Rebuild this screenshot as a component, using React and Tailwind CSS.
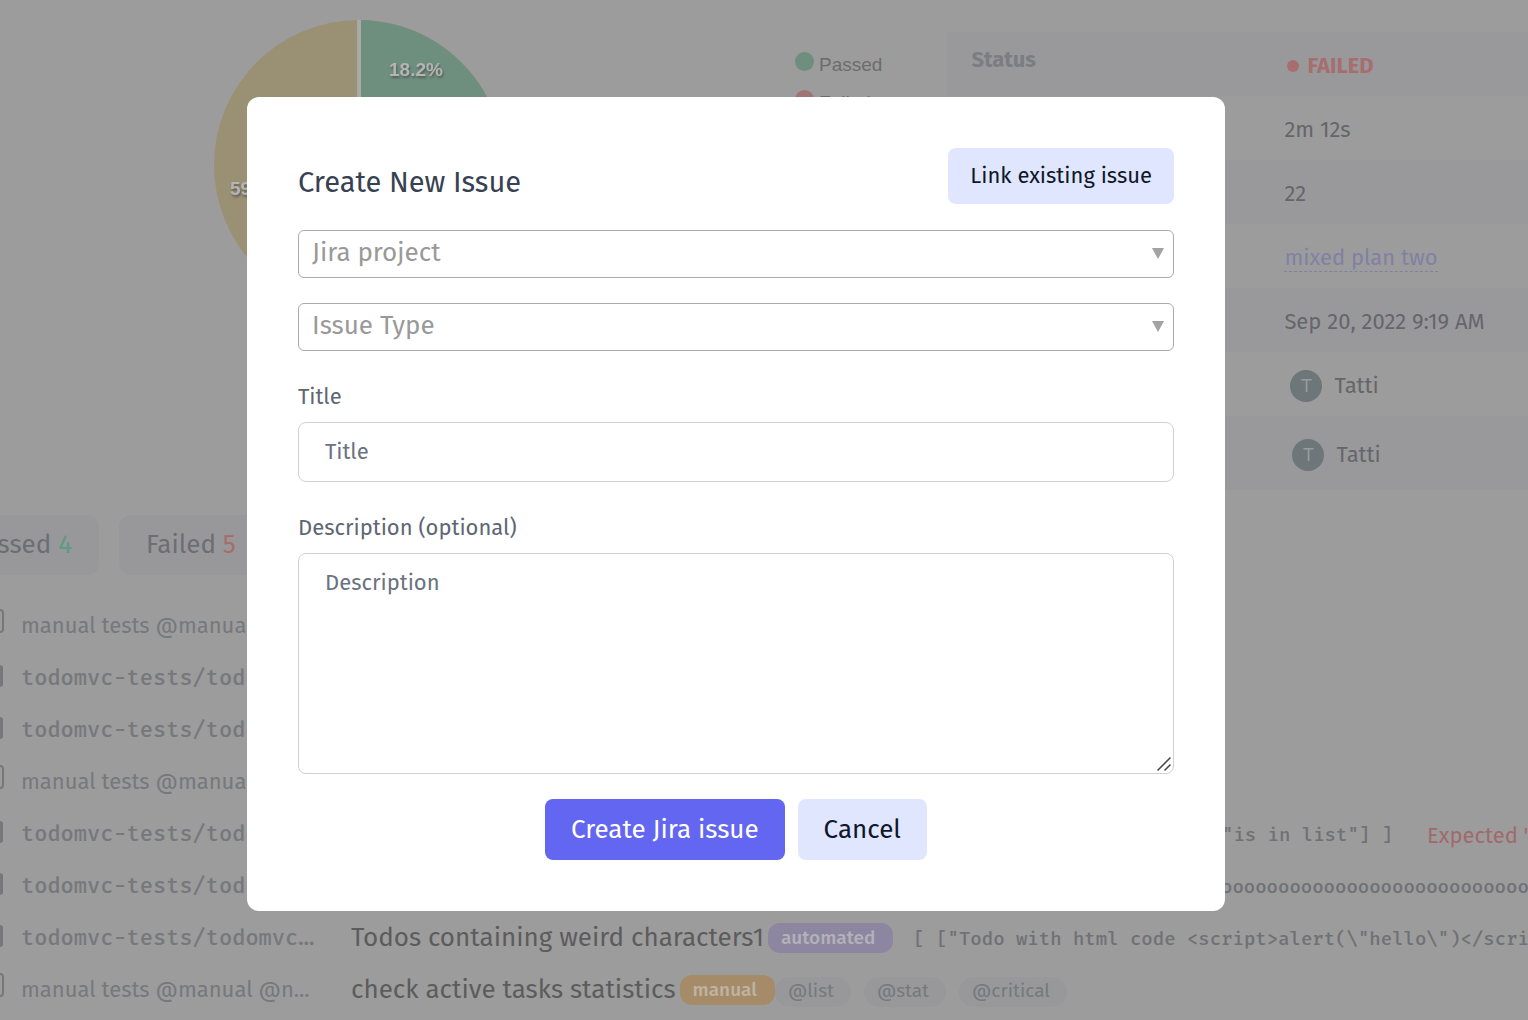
import React from "react";

const SANS = "font-['Fira_Sans','Open_Sans','Noto_Sans',sans-serif]";
const MONO = "font-['Fira_Mono','DejaVu_Sans_Mono',monospace]";

function Pie() {
  return (
    <svg viewBox="0 0 292 292" className="h-[292px] w-[292px]" role="img" aria-label="Results">
      <circle cx="146" cy="146" r="145" fill="#9a9073" />
      <path d="M146 146 V1 A145 145 0 0 1 277.9 206.3 Z" fill="#6f8f7e" />
      <path d="M146 146 L277.9 206.3 A145 145 0 0 1 67.5 267.9 Z" fill="#a07474" />
      <path d="M146 1 V146" stroke="#a9a9a9" strokeWidth="4" />
      <g
        fill="#b4b4b4"
        fontSize="19"
        fontWeight="700"
        fontFamily="Liberation Sans, sans-serif"
        style={{ filter: "drop-shadow(1px 2px 1px rgba(60,60,60,.6))" }}
      >
        <text x="176" y="57">18.2%</text>
        <text x="17" y="176">59.1%</text>
      </g>
    </svg>
  );
}

function LegendItem({ color, label }) {
  return (
    <li className="flex h-[38px] items-start gap-[5px]">
      <span className={`size-[19px] rounded-full ${color}`} />
      <span className="pt-0.5 text-[19px] leading-[22px] text-[#6c6c6c]">{label}</span>
    </li>
  );
}

function Person({ name, indent }) {
  return (
    <span className={`flex items-center gap-3 ${indent}`}>
      <span className="flex size-8 items-center justify-center rounded-full bg-[#6d7678] font-['Liberation_Sans',sans-serif] text-lg text-[#989c9d]">
        T
      </span>
      {name}
    </span>
  );
}

function InfoTable() {
  const rows = [
    {
      label: "Status",
      value: (
        <span className="flex items-center gap-2 pl-[3px] font-bold text-[#a76e6e]">
          <span className="size-3 rounded-full bg-[#a76e6e]" />
          FAILED
        </span>
      ),
    },
    { value: "2m 12s" },
    { value: "22" },
    {
      value: (
        <a href="#plan" className="border-b border-dashed border-[#8280a4] text-[#8280a4]">
          mixed plan two
        </a>
      ),
    },
    { value: "Sep 20, 2022 9:19 AM" },
    { value: <Person name="Tatti" indent="pl-1.5" /> },
    { value: <Person name="Tatti" indent="pl-2" /> },
  ];
  return (
    <table className="w-full border-collapse text-[22px] leading-7 text-[#65666a]">
      <tbody>
        {rows.map((r, i) => (
          <tr key={i} className="h-16 odd:bg-[#99999c] last:h-[74px]">
            <th scope="row" className="w-[337px] pt-3.5 pl-6 text-left align-top font-bold text-[#7c7d82]">
              {r.label}
            </th>
            <td className="pt-1 whitespace-nowrap">{r.value}</td>
          </tr>
        ))}
      </tbody>
    </table>
  );
}

function Tab({ label, count, color }) {
  return (
    <button type="button" className="h-15 rounded-xl bg-[#98989b] px-[27px] pb-0.5 text-[26px] text-[#6d6e72]">
      {label} <span className={color}>{count}</span>
    </button>
  );
}

function Suite({ manual }) {
  return manual ? (
    <>
      <span className="mb-2 h-6 w-1 shrink-0 rounded-r border-y-2 border-r-2 border-[#77787c]" />
      <span className="w-[330px] shrink-0 pl-[17px] text-[22px] text-[#77787c]">manual tests @manual @n...</span>
    </>
  ) : (
    <>
      <span className="mb-0.5 h-[22px] w-[3px] shrink-0 rounded-r bg-[#77787c]" />
      <span className={`w-[331px] shrink-0 pl-[18px] text-[22px] font-medium text-[#77787c] ${MONO}`}>
        todomvc-tests/todomvc<span className={SANS}>…</span>
      </span>
    </>
  );
}

function Row({ manual, children }) {
  return (
    <li className="flex h-13 items-center whitespace-nowrap">
      <Suite manual={manual} />
      <div className="flex items-center pl-[17px]">{children}</div>
    </li>
  );
}

function Tag({ children }) {
  return (
    <span className="mt-1.5 mr-[13px] h-[30px] rounded-full bg-[#98989b] pr-[17px] pl-[13px] text-[19px] leading-[28px] text-[#77787c]">
      {children}
    </span>
  );
}

const code = `mt-1 text-[19px] font-medium text-[#707175] ${MONO}`;
const testName = "text-[26px] text-[#5c5c5c]";
const kind = "mt-0.5 ml-1 h-[30px] rounded-xl pr-[18px] pl-[13px] text-[19px] leading-[30px] font-medium";

function Report() {
  return (
    <div className="min-h-screen overflow-hidden bg-[#9c9c9c]">
      <div className="flex h-[515px] items-start">
        <div className="flex flex-1 justify-between pt-[19px] pr-[65px] pl-[213px] font-['Liberation_Sans',sans-serif]">
          <Pie />
          <ul className="pt-[33px]">
            <LegendItem color="bg-[#6f8f7e]" label="Passed" />
            <LegendItem color="bg-[#a07474]" label="Failed" />
          </ul>
        </div>
        <div className="w-[38%] pt-8">
          <InfoTable />
        </div>
      </div>
      <div className="-ml-[57px] flex gap-5">
        <Tab label="Passed" count="4" color="text-[#5f9a84]" />
        <Tab label="Failed" count="5" color="text-[#a86c6c]" />
      </div>
      <ul className="mt-6">
        <Row manual />
        <Row />
        <Row />
        <Row manual />
        <Row>
          <span className="w-[871px] shrink-0" />
          <span className={code}>"is in list"] ]</span>
          <span className="mt-1 pl-[34px] text-[22px] text-[#a06a6c]">Expected "Todo</span>
        </Row>
        <Row>
          <span className="w-[870px] shrink-0" />
          <span className={code}>oooooooooooooooooooooooooooooooo</span>
        </Row>
        <Row>
          <span className={testName}>Todos containing weird characters1</span>
          <span className={`bg-[#8c86a0] text-[#b3b1ba] ${kind}`}>automated</span>
          <span className={`pl-5 ${code}`}>{'[ ["Todo with html code <script>alert(\\"hello\\")</script>'}</span>
        </Row>
        <Row manual>
          <span className={testName}>check active tasks statistics</span>
          <span className={`bg-[#a58b68] text-[#beb3a4] ${kind}`}>manual</span>
          <Tag>@list</Tag>
          <Tag>@stat</Tag>
          <Tag>@critical</Tag>
        </Row>
      </ul>
    </div>
  );
}

function Select({ label }) {
  return (
    <div className="relative">
      <select
        aria-label={label}
        defaultValue=""
        className="block h-12 w-full appearance-none rounded-md border border-[#aaa] bg-white pr-10 pb-0.5 pl-[13px] text-[26px] leading-8 text-[#999]"
      >
        <option value="">{label}</option>
      </select>
      <svg viewBox="0 0 12 11" className="pointer-events-none absolute top-[18px] right-2.5 h-[11px] w-3" fill="#a3a3a3" aria-hidden="true">
        <path d="M0 0H12L6 11Z" />
      </svg>
    </div>
  );
}

function Dialog() {
  return (
    <div className="fixed inset-0 flex items-start justify-center overflow-hidden pt-[97px] pr-14">
      <form
        role="dialog"
        aria-labelledby="dialog-title"
        className="w-full max-w-[978px] rounded-xl bg-white p-[51px]"
      >
        <div className="flex items-start justify-between">
          <h2 id="dialog-title" className="pt-[17px] text-[29px] leading-9 text-[#374151]">
            Create New Issue
          </h2>
          <button type="button" className="h-14 rounded-lg bg-[#dfe6fe] px-[22px] pb-0.5 text-[22px] text-[#0f172a]">
            Link existing issue
          </button>
        </div>
        <div className="mt-[26px] grid gap-[25px]">
          <Select label="Jira project" />
          <Select label="Issue Type" />
        </div>
        <label htmlFor="title" className="mt-8 block text-[22px] leading-7 text-[#5f6673]">
          Title
        </label>
        <input
          id="title"
          placeholder="Title"
          className="mt-[11px] block h-15 w-full rounded-lg border border-[#d1d1d4] px-[26px] pb-0.5 text-[22px] placeholder:text-[#6b7280]"
        />
        <label htmlFor="description" className="mt-8 block text-[22px] leading-7 text-[#5f6673]">
          Description (optional)
        </label>
        <div className="relative mt-[11px]">
          <textarea
            id="description"
            placeholder="Description"
            className="block h-[221px] w-full resize-none rounded-lg border border-[#d1d1d4] px-[26px] py-[15px] text-[22px] leading-7 placeholder:text-[#6b7280]"
          />
          <svg viewBox="0 0 14 14" className="pointer-events-none absolute right-[3px] bottom-[3px] size-3.5" stroke="#444" strokeWidth="1.5" aria-hidden="true">
            <path d="M0.5 13.5L13.5 0.5M7.5 13.5L13.5 7.5" />
          </svg>
        </div>
        <div className="mt-[25px] flex justify-center gap-[13px]">
          <button type="submit" className="h-[61px] rounded-lg bg-[#6366f1] px-[26px] text-[26px] text-white">
            Create Jira issue
          </button>
          <button type="button" className="h-[61px] rounded-lg bg-[#dfe6fe] px-[26px] text-[26px] text-[#0f172a]">
            Cancel
          </button>
        </div>
      </form>
    </div>
  );
}

export default function App() {
  return (
    <div className={SANS}>
      <Report />
      <Dialog />
    </div>
  );
}
